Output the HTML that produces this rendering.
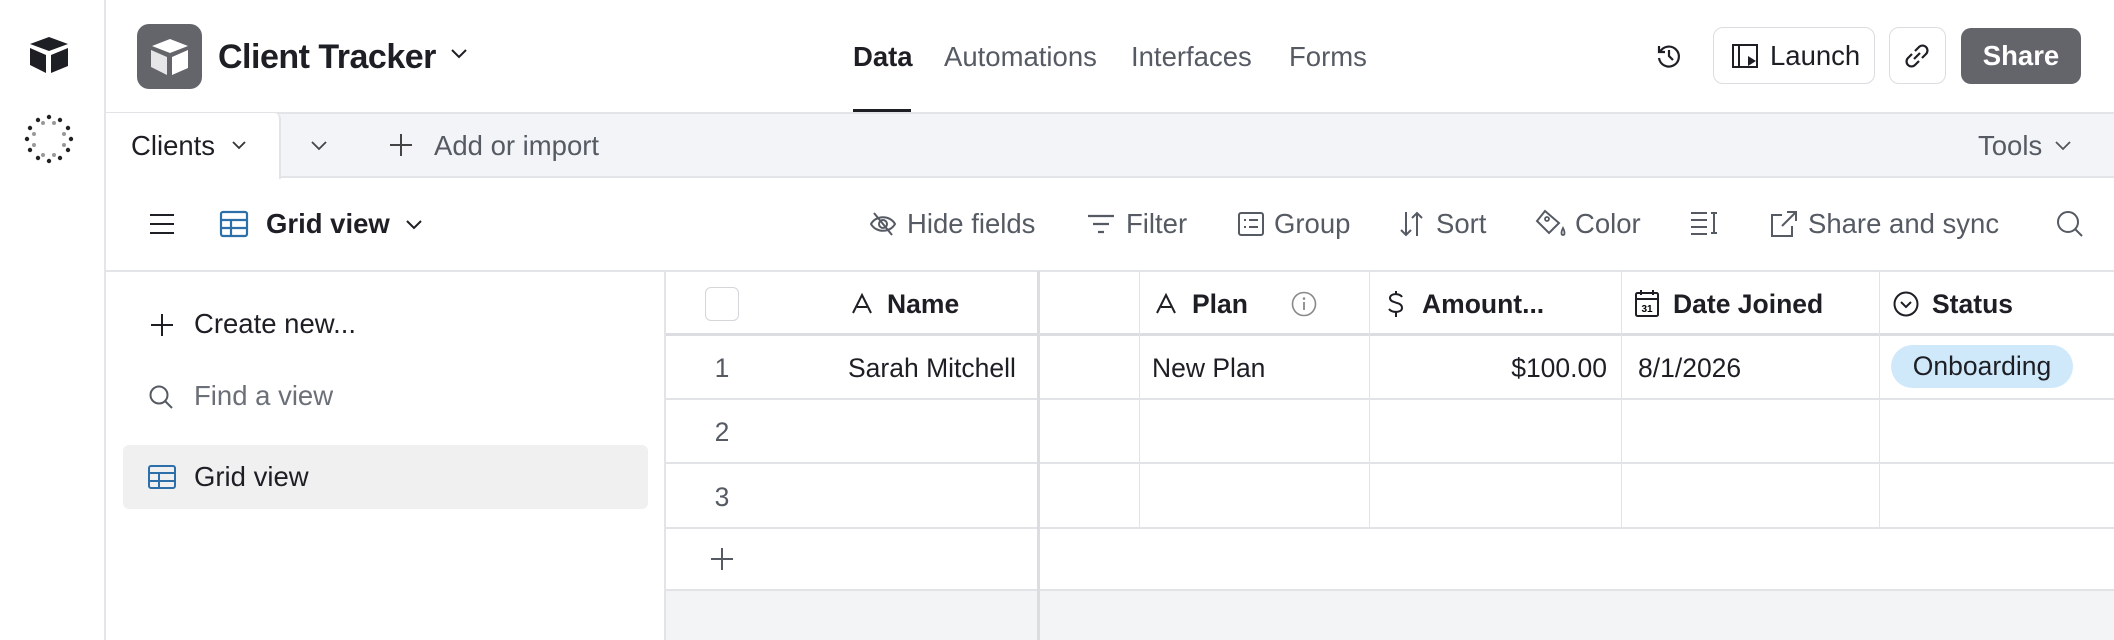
<!DOCTYPE html>
<html><head><meta charset="utf-8"><style>
*{box-sizing:border-box;margin:0;padding:0}
body{width:2114px;height:640px;overflow:hidden;background:#fff;font-family:"Liberation Sans",Arial,sans-serif;color:#1d1f25;position:relative}
.a{position:absolute;white-space:nowrap}
.t{font-size:26.5px;line-height:30px}
.n{font-size:27.5px;line-height:30px}
.g{color:#555a63}
svg{position:absolute;overflow:visible}
.h{background:#e1e3e7}
</style></head><body>
<div class="a" style="left:104px;top:0;width:2px;height:640px;background:#e4e5e8"></div>
<svg style="left:27px;top:35px" width="44" height="40" viewBox="0 0 44 40"><path d="M22 2 L41 9 L22 16 L3 9Z" fill="#1d1f25"/><path d="M3 13 L19 20 L19 38 L3 30Z" fill="#1d1f25"/><path d="M24 20 L41 13 L41 31 L24 38Z" fill="#1d1f25"/></svg>
<svg style="left:24px;top:114px" width="50" height="50" viewBox="0 0 50 50"><g fill="#222"><circle cx="25" cy="3" r="2.2"/><circle cx="36" cy="6" r="2.2"/><circle cx="44" cy="14" r="2.2"/><circle cx="47" cy="25" r="2.2"/><circle cx="44" cy="36" r="2.2"/><circle cx="36" cy="44" r="2.2"/><circle cx="25" cy="47" r="2.2"/><circle cx="14" cy="44" r="2.2"/><circle cx="6" cy="36" r="2.2"/><circle cx="3" cy="25" r="2.2"/><circle cx="6" cy="14" r="2.2"/><circle cx="14" cy="6" r="2.2"/></g><g fill="#999"><circle cx="30" cy="9" r="2"/><circle cx="40" cy="20" r="2"/><circle cx="40" cy="31" r="2"/><circle cx="30" cy="41" r="2"/><circle cx="19" cy="41" r="2"/><circle cx="10" cy="31" r="2"/><circle cx="10" cy="20" r="2"/><circle cx="19" cy="9" r="2"/></g></svg>
<div class="a" style="left:137px;top:24px;width:65px;height:65px;border-radius:12px;background:#63656b"></div>
<svg style="left:148px;top:37px" width="44" height="40" viewBox="0 0 44 40"><path d="M22 2 L40 9 L22 16 L4 9Z" fill="#fff"/><path d="M3 13 L19 20 L19 38 L3 30Z" fill="#e6e6e8"/><path d="M24 20 L40 13 L40 31 L24 38Z" fill="#fff"/></svg>
<div class="a" style="left:218px;top:37px;font-size:34px;font-weight:bold;line-height:40px;letter-spacing:-0.5px">Client Tracker</div>
<svg style="left:451px;top:49px" width="16" height="10"><path d="M1 1 L8 8 L15 1" stroke="#1d1f25" stroke-width="2" fill="none"/></svg>
<div class="a n" style="left:853px;top:42px;font-weight:bold">Data</div>
<div class="a" style="left:853px;top:109px;width:58px;height:4px;background:#1d1f25"></div>
<div class="a n g" style="left:944px;top:42px">Automations</div>
<div class="a n g" style="left:1131px;top:42px">Interfaces</div>
<div class="a n g" style="left:1289px;top:42px">Forms</div>
<svg style="left:1656px;top:43px" width="26" height="26" viewBox="0 0 26 26"><path d="M4 9 A10 10 0 1 1 3 15" stroke="#1d1f25" stroke-width="2.2" fill="none"/><path d="M3 3 V9 H9" stroke="#1d1f25" stroke-width="2.2" fill="none"/><path d="M13 7 V13 L17 17" stroke="#1d1f25" stroke-width="2.2" fill="none"/></svg>
<div class="a" style="left:1713px;top:27px;width:162px;height:57px;border:1.5px solid #dcdde0;border-radius:10px"></div>
<svg style="left:1732px;top:44px" width="26" height="24" viewBox="0 0 26 24"><rect x="1" y="1" width="24" height="22" fill="none" stroke="#1d1f25" stroke-width="2"/><path d="M7 1 V23" stroke="#1d1f25" stroke-width="2"/><path d="M16 12 L24 17 L16 22Z" fill="#1d1f25"/></svg>
<div class="a n" style="left:1770px;top:41px">Launch</div>
<div class="a" style="left:1889px;top:27px;width:57px;height:57px;border:1.5px solid #dcdde0;border-radius:10px"></div>
<svg style="left:1904px;top:43px" width="26" height="26" viewBox="0 0 26 26"><path d="M11 8 L15 4 A4.5 4.5 0 0 1 22 11 L18 15" stroke="#1d1f25" stroke-width="2.2" fill="none"/><path d="M15 18 L11 22 A4.5 4.5 0 0 1 4 15 L8 11" stroke="#1d1f25" stroke-width="2.2" fill="none"/><path d="M10 16 L16 10" stroke="#1d1f25" stroke-width="2.2"/></svg>
<div class="a" style="left:1961px;top:28px;width:120px;height:56px;border-radius:10px;background:#63656b"></div>
<div class="a n" style="left:1961px;top:41px;width:120px;text-align:center;color:#fff;font-weight:bold">Share</div>
<div class="a" style="left:106px;top:112px;width:2008px;height:66px;background:#f2f4f8;border-top:2px solid #e2e4e8;border-bottom:2px solid #e2e4e8"></div>
<div class="a" style="left:106px;top:113px;width:175px;height:66px;background:#fff;border-right:2px solid #e2e4e8;border-radius:0 6px 0 0"></div>
<div class="a n" style="left:131px;top:131px">Clients</div>
<svg style="left:232px;top:141px" width="14" height="9"><path d="M1 1 L7 7 L13 1" stroke="#333" stroke-width="1.8" fill="none"/></svg>
<svg style="left:311px;top:141px" width="16" height="10"><path d="M1 1 L8 8 L15 1" stroke="#444" stroke-width="1.8" fill="none"/></svg>
<svg style="left:389px;top:133px" width="24" height="24"><path d="M12 1 V23 M1 12 H23" stroke="#444" stroke-width="2"/></svg>
<div class="a n g" style="left:434px;top:131px">Add or import</div>
<div class="a n g" style="left:1978px;top:131px">Tools</div>
<svg style="left:2055px;top:141px" width="16" height="10"><path d="M1 1 L8 8 L15 1" stroke="#555" stroke-width="1.8" fill="none"/></svg>
<svg style="left:149px;top:213px" width="26" height="22"><path d="M1 2 H25 M1 11 H25 M1 20 H25" stroke="#1d1f25" stroke-width="2"/></svg>
<svg style="left:220px;top:211px" width="28" height="26" viewBox="0 0 28 26"><rect x="1" y="1" width="26" height="24" rx="2" fill="none" stroke="#2d6fa8" stroke-width="2.2"/><path d="M1 9 H27 M1 17 H27 M11 9 V25" stroke="#2d6fa8" stroke-width="2.2"/></svg>
<div class="a n" style="left:266px;top:209px;font-weight:bold">Grid view</div>
<svg style="left:406px;top:220px" width="16" height="10"><path d="M1 1 L8 8 L15 1" stroke="#1d1f25" stroke-width="2" fill="none"/></svg>
<svg style="left:869px;top:212px" width="28" height="24" viewBox="0 0 28 24"><path d="M2 12 C7 3 21 3 26 12 C21 21 7 21 2 12Z" fill="none" stroke="#555a63" stroke-width="2"/><circle cx="14" cy="12" r="4" fill="none" stroke="#555a63" stroke-width="2"/><path d="M5 1 L23 23" stroke="#555a63" stroke-width="2"/></svg>
<div class="a n g" style="left:907px;top:209px">Hide fields</div>
<svg style="left:1087px;top:214px" width="28" height="20"><path d="M1 2 H27 M6 10 H22 M11 18 H17" stroke="#555a63" stroke-width="2.2"/></svg>
<div class="a n g" style="left:1126px;top:209px">Filter</div>
<svg style="left:1238px;top:212px" width="26" height="24"><rect x="1" y="1" width="24" height="22" rx="2" fill="none" stroke="#555a63" stroke-width="2"/><path d="M6 8 H8 M11 8 H20 M6 15 H8 M11 15 H20" stroke="#555a63" stroke-width="2"/></svg>
<div class="a n g" style="left:1274px;top:209px">Group</div>
<svg style="left:1400px;top:211px" width="24" height="26"><path d="M6 1 V24 M1 19 L6 24 L11 19 M17 25 V2 M12 7 L17 2 L22 7" stroke="#555a63" stroke-width="2" fill="none"/></svg>
<div class="a n g" style="left:1436px;top:209px">Sort</div>
<svg style="left:1535px;top:208px" width="32" height="30" viewBox="0 0 32 30"><path d="M10 3 L24 15 L14 25 L2 13Z" fill="none" stroke="#555a63" stroke-width="2"/><circle cx="12" cy="11" r="2" fill="none" stroke="#555a63" stroke-width="1.8"/><path d="M28 20 C26 24 26 27 28 27 C30 27 30 24 28 20Z" fill="none" stroke="#555a63" stroke-width="1.8"/></svg>
<div class="a n g" style="left:1575px;top:209px">Color</div>
<svg style="left:1690px;top:211px" width="30" height="24"><path d="M1 2 H17 M1 9 H17 M1 16 H17 M1 23 H17" stroke="#555a63" stroke-width="2"/><path d="M24 2 V22 M21 2 H27 M21 22 H27" stroke="#555a63" stroke-width="2"/></svg>
<svg style="left:1770px;top:210px" width="28" height="28"><path d="M12 5 H2 V26 H22 V16" stroke="#555a63" stroke-width="2" fill="none"/><path d="M12 16 L26 2 M17 2 H26 V11" stroke="#555a63" stroke-width="2" fill="none"/></svg>
<div class="a n g" style="left:1808px;top:209px">Share and sync</div>
<svg style="left:2056px;top:210px" width="28" height="28"><circle cx="12" cy="12" r="10" fill="none" stroke="#555a63" stroke-width="2"/><path d="M19 19 L26 26" stroke="#555a63" stroke-width="2"/></svg>
<div class="a" style="left:106px;top:270px;width:2008px;height:2px;background:#e2e4e8"></div>
<svg style="left:150px;top:313px" width="24" height="24"><path d="M12 1 V23 M1 12 H23" stroke="#1d1f25" stroke-width="2"/></svg>
<div class="a n" style="left:194px;top:309px">Create new...</div>
<svg style="left:148px;top:384px" width="26" height="26"><circle cx="11" cy="11" r="8.5" fill="none" stroke="#555a63" stroke-width="2"/><path d="M17 17 L24 24" stroke="#555a63" stroke-width="2"/></svg>
<div class="a n" style="left:194px;top:381px;color:#6b6f77">Find a view</div>
<div class="a" style="left:123px;top:445px;width:525px;height:64px;background:#f0f0f0;border-radius:6px"></div>
<svg style="left:148px;top:465px" width="28" height="24" viewBox="0 0 28 24"><rect x="1" y="1" width="26" height="22" rx="2" fill="none" stroke="#2d6fa8" stroke-width="2"/><path d="M1 8 H27 M1 16 H27 M11 8 V23" stroke="#2d6fa8" stroke-width="2"/></svg>
<div class="a n" style="left:194px;top:462px">Grid view</div>
<div class="a" style="left:664px;top:271px;width:2px;height:369px;background:#e2e4e8"></div>
<div class="a" style="left:666px;top:590px;width:1448px;height:50px;background:#f3f4f6"></div>
<div class="a h" style="left:666px;top:333px;width:1448px;height:3px;background:#dcdde0"></div>
<div class="a h" style="left:666px;top:398px;width:1448px;height:2px"></div>
<div class="a h" style="left:666px;top:462px;width:1448px;height:2px"></div>
<div class="a h" style="left:666px;top:527px;width:1448px;height:2px"></div>
<div class="a h" style="left:666px;top:589px;width:1448px;height:2px"></div>
<div class="a" style="left:1037px;top:271px;width:3px;height:369px;background:#dcdde0"></div>
<div class="a h" style="left:1139px;top:271px;width:1px;height:258px"></div>
<div class="a h" style="left:1369px;top:271px;width:1px;height:258px"></div>
<div class="a h" style="left:1621px;top:271px;width:1px;height:258px"></div>
<div class="a h" style="left:1879px;top:271px;width:1px;height:258px"></div>
<div class="a" style="left:705px;top:287px;width:34px;height:34px;border:1.5px solid #d4d6da;border-radius:6px;background:#fff"></div>
<svg style="left:852px;top:294px" width="20" height="20"><path d="M1 19 L10 1 L19 19 M5 13 H15" stroke="#1d1f25" stroke-width="2" fill="none"/></svg>
<div class="a t" style="left:887px;top:289px;font-weight:bold">Name</div>
<svg style="left:1156px;top:294px" width="20" height="20"><path d="M1 19 L10 1 L19 19 M5 13 H15" stroke="#1d1f25" stroke-width="2" fill="none"/></svg>
<div class="a t" style="left:1192px;top:289px;font-weight:bold">Plan</div>
<svg style="left:1291px;top:291px" width="26" height="26"><circle cx="13" cy="13" r="11.5" fill="none" stroke="#888" stroke-width="1.6"/><path d="M13 11 V19" stroke="#888" stroke-width="1.8"/><circle cx="13" cy="7.5" r="1.3" fill="#888"/></svg>
<svg style="left:1386px;top:290px" width="20" height="30"><path d="M16 7 C14 3 4 3 4 8 C4 14 16 11 16 18 C16 23 6 23 3 19 M10 1 V4 M10 22 V27" stroke="#1d1f25" stroke-width="2" fill="none"/></svg>
<div class="a t" style="left:1422px;top:289px;font-weight:bold">Amount...</div>
<svg style="left:1635px;top:289px" width="24" height="28"><rect x="1" y="4" width="22" height="23" rx="1.5" fill="none" stroke="#1d1f25" stroke-width="2"/><path d="M1 10 H23 M6 1 V6 M18 1 V6" stroke="#1d1f25" stroke-width="2"/><text x="12" y="23" font-size="10" font-weight="bold" text-anchor="middle" font-family="Liberation Sans">31</text></svg>
<div class="a t" style="left:1673px;top:289px;font-weight:bold">Date Joined</div>
<svg style="left:1893px;top:291px" width="26" height="26"><circle cx="13" cy="13" r="11.5" fill="none" stroke="#1d1f25" stroke-width="2"/><path d="M8 11 L13 16 L18 11" stroke="#1d1f25" stroke-width="2" fill="none"/></svg>
<div class="a t" style="left:1932px;top:289px;font-weight:bold">Status</div>
<div class="a t" style="left:705px;top:353px;width:34px;text-align:center;color:#555a63">1</div>
<div class="a t" style="left:705px;top:417px;width:34px;text-align:center;color:#555a63">2</div>
<div class="a t" style="left:705px;top:482px;width:34px;text-align:center;color:#555a63">3</div>
<svg style="left:710px;top:547px" width="24" height="24"><path d="M12 1 V23 M1 12 H23" stroke="#555a63" stroke-width="2"/></svg>
<div class="a t" style="left:848px;top:353px">Sarah Mitchell</div>
<div class="a t" style="left:1152px;top:353px">New Plan</div>
<div class="a t" style="left:1450px;top:353px;width:157px;text-align:right">$100.00</div>
<div class="a t" style="left:1638px;top:353px">8/1/2026</div>
<div class="a" style="left:1891px;top:345px;width:182px;height:43px;border-radius:22px;background:#cfe9fb"></div>
<div class="a t" style="left:1891px;top:351px;width:182px;text-align:center">Onboarding</div>
</body></html>
